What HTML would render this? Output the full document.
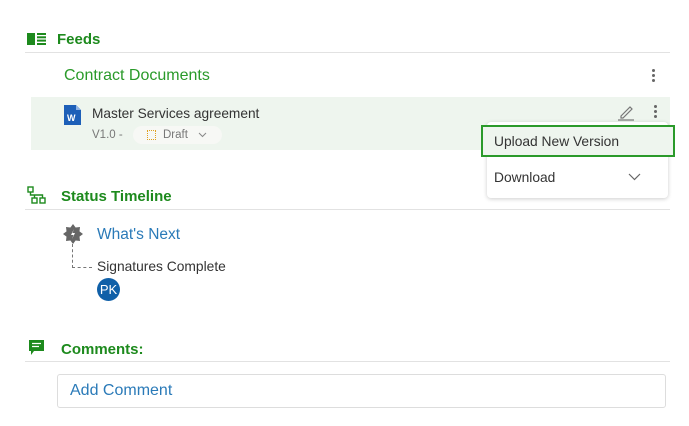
<!DOCTYPE html>
<html><head><style>
*{margin:0;padding:0;box-sizing:border-box}
body{width:689px;height:426px;background:#fff;font-family:"Liberation Sans",sans-serif;position:relative;overflow:hidden}
.a{position:absolute;white-space:nowrap}
.h{font-weight:bold;font-size:15px;color:#1d8a1d}
.line{position:absolute;height:1px;background:#e2e2e2}
.kb{position:absolute;width:3px;height:3px;border-radius:50%;background:#666}
</style></head><body>
<svg class="a" style="left:27px;top:33px" width="19" height="12" viewBox="0 0 19 12"><rect x="0" y="0" width="8" height="12" fill="#1d8a1d"/><rect x="10" y="0" width="9" height="2" fill="#1d8a1d"/><rect x="10" y="3.3" width="9" height="2" fill="#1d8a1d"/><rect x="10" y="6.6" width="9" height="2" fill="#1d8a1d"/><rect x="10" y="10" width="9" height="2" fill="#1d8a1d"/></svg>
<div class="a h" style="left:57px;top:31px">Feeds</div>
<div class="line" style="left:25px;top:52px;width:645px"></div>
<div class="a" style="left:64px;top:67px;font-size:16px;color:#2a9a2a">Contract Documents</div>
<div class="kb" style="left:652px;top:69px"></div><div class="kb" style="left:652px;top:74px"></div><div class="kb" style="left:652px;top:79px"></div>
<div class="a" style="left:31px;top:97px;width:639px;height:53px;background:#eef5ee"></div>
<svg class="a" style="left:64px;top:105px" width="17" height="20" viewBox="0 0 17 20"><path d="M0 0H12L17 5V20H0Z" fill="#1d5fb8"/><path d="M12 0V5H17Z" fill="#8fb3e6"/><text x="3" y="16" font-size="9" font-weight="bold" fill="#fff" font-family="Liberation Sans">W</text></svg>
<div class="a" style="left:92px;top:106px;font-size:13.7px;color:#333">Master Services agreement</div>
<div class="a" style="left:92px;top:129px;font-size:11.5px;color:#777">V1.0 -</div>
<div class="a" style="left:133px;top:126px;width:89px;height:18px;border-radius:9px;background:#f7f8f5"></div>
<div class="a" style="left:147px;top:130px;width:9px;height:10px;border:1.5px dotted #e0a020"></div>
<div class="a" style="left:163px;top:129px;font-size:11.5px;color:#777">Draft</div>
<svg class="a" style="left:198px;top:132px" width="9" height="6"><path d="M1 1L4.5 4.5L8 1" stroke="#888" fill="none"/></svg>
<svg class="a" style="left:617px;top:103px" width="18" height="18" viewBox="0 0 18 18"><path d="M4 13L13 4L15 6L6 15H4Z" stroke="#777" fill="none" stroke-width="1.2"/><path d="M1 17H17" stroke="#777" stroke-width="1.2"/></svg>
<div class="kb" style="left:654px;top:105px"></div><div class="kb" style="left:654px;top:110px"></div><div class="kb" style="left:654px;top:115px"></div>
<div class="a" style="left:487px;top:122px;width:181px;height:76px;background:#fff;border-radius:4px;box-shadow:0 1px 4px rgba(0,0,0,.2)"></div>
<div class="a" style="left:481px;top:125px;width:194px;height:32px;border:2px solid #2a9a2a;background:#eef5ee"></div>
<div class="a" style="left:494px;top:134px;font-size:13.8px;color:#333">Upload New Version</div>
<div class="a" style="left:494px;top:170px;font-size:13.8px;color:#333">Download</div>
<svg class="a" style="left:628px;top:173px" width="13" height="8"><path d="M1 1L6.5 6.5L12 1" stroke="#666" fill="none" stroke-width="1.2"/></svg>
<svg class="a" style="left:27px;top:186px" width="19" height="18" viewBox="0 0 19 18"><g stroke="#1d8a1d" fill="none" stroke-width="1.4"><rect x="1" y="1" width="5" height="5"/><rect x="5" y="12" width="5" height="5"/><rect x="13" y="12" width="5" height="5"/><path d="M3.5 6V9H15.5V12M7.5 9V12"/></g></svg>
<div class="a h" style="left:61px;top:188px">Status Timeline</div>
<div class="line" style="left:25px;top:209px;width:645px"></div>
<svg class="a" style="left:63px;top:224px" width="20" height="20" viewBox="0 0 20 20"><path d="M10 0L12.6 3.5L17 3L16.5 7.4L20 10L16.5 12.6L17 17L12.6 16.5L10 20L7.4 16.5L3 17L3.5 12.6L0 10L3.5 7.4L3 3L7.4 3.5Z" fill="#666"/><path d="M11 5L8 11H10.5L9 15L12 9H9.5Z" fill="#fff"/></svg>
<div class="a" style="left:97px;top:226px;font-size:15.5px;color:#2a7ab8">What's Next</div>
<div class="a" style="left:72px;top:244px;width:20px;height:24px;border-left:1px dashed #777;border-bottom:1px dashed #777"></div>
<div class="a" style="left:97px;top:259px;font-size:13.8px;color:#333">Signatures Complete</div>
<div class="a" style="left:97px;top:278px;width:23px;height:23px;border-radius:50%;background:#1060a8;color:#fff;font-size:13px;text-align:center;line-height:23px">PK</div>
<svg class="a" style="left:29px;top:340px" width="15" height="15" viewBox="0 0 15 15"><path d="M0 0H15V11H5L2 15V11H0Z" fill="#1d8a1d"/><path d="M3 3.5H12M3 6.5H10" stroke="#fff" stroke-width="1.3"/></svg>
<div class="a h" style="left:61px;top:341px">Comments:</div>
<div class="line" style="left:25px;top:361px;width:645px"></div>
<div class="a" style="left:57px;top:374px;width:609px;height:34px;border:1px solid #ddd;border-radius:3px"></div>
<div class="a" style="left:70px;top:382px;font-size:16px;color:#2a7ab8">Add Comment</div>
</body></html>
